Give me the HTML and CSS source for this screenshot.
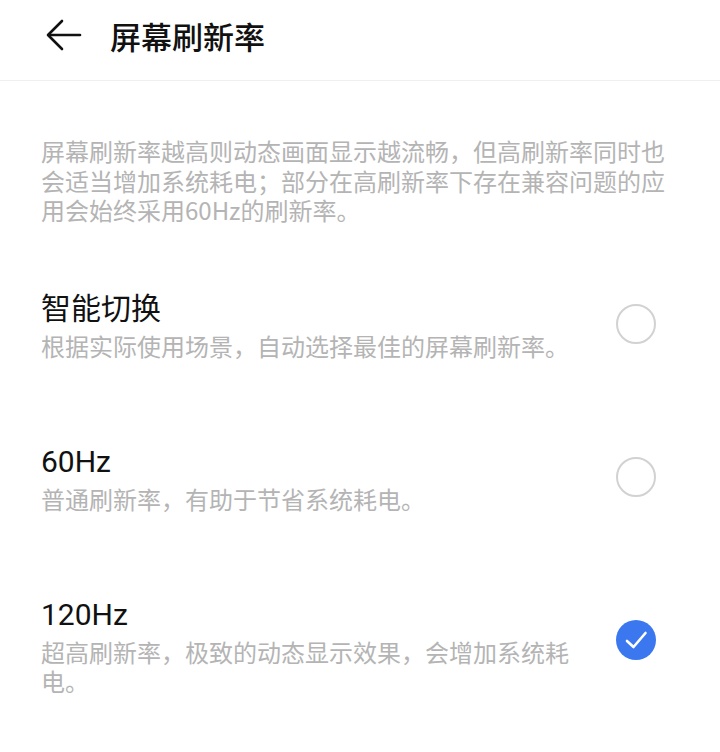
FILE: index.html
```html
<!DOCTYPE html>
<html lang="zh-CN">
<head>
  <meta charset="UTF-8">
  <title>屏幕刷新率</title>
  <link rel="stylesheet" href="styles.css">
</head>
<body>
  <header class="topbar">
    <button class="back-btn" aria-label="返回">
      <svg width="36" height="32" viewBox="0 0 36 32" fill="none" stroke="#111" stroke-width="2.6" stroke-linecap="round" stroke-linejoin="round">
        <path d="M34 16H3"/>
        <path d="M16 2L2 16l14 14"/>
      </svg>
    </button>
    <h1 class="title">屏幕刷新率</h1>
  </header>

  <p class="intro">屏幕刷新率越高则动态画面显示越流畅，但高刷新率同时也会适当增加系统耗电；部分在高刷新率下存在兼容问题的应用会始终采用60Hz的刷新率。</p>

  <ul class="options">
    <li class="option">
      <div class="option-text">
        <div class="option-name">智能切换</div>
        <div class="option-desc">根据实际使用场景，自动选择最佳的屏幕刷新率。</div>
      </div>
      <span class="radio"></span>
    </li>
    <li class="option">
      <div class="option-text">
        <div class="option-name">60Hz</div>
        <div class="option-desc">普通刷新率，有助于节省系统耗电。</div>
      </div>
      <span class="radio"></span>
    </li>
    <li class="option">
      <div class="option-text">
        <div class="option-name">120Hz</div>
        <div class="option-desc">超高刷新率，极致的动态显示效果，会增加系统耗电。</div>
      </div>
      <span class="radio checked">
        <svg width="40" height="40" viewBox="0 0 40 40" fill="none" stroke="#fff" stroke-width="2.6" stroke-linecap="round" stroke-linejoin="round">
          <path d="M11 21l6.5 6L29.5 13"/>
        </svg>
      </span>
    </li>
  </ul>
</body>
</html>
```

FILE: styles.css
```css
body {
  margin: 0;
  background: #fff;
  color: #111;
  font-family: Roboto, "Noto Sans CJK SC", sans-serif;
}

.topbar {
  display: flex;
  align-items: center;
  height: 80px;
  padding: 0 0 0 46px;
  border-bottom: 1px solid #efefef;
}

.back-btn {
  display: flex;
  align-items: center;
  padding: 0;
  margin: -10px 28px 0 0;
  background: none;
  border: none;
  cursor: pointer;
}

.title {
  margin: -8px 0 0 0;
  font-family: "Noto Sans CJK SC", sans-serif;
  font-size: 31px;
  font-weight: 500;
  line-height: 40px;
}

.intro {
  margin: 0;
  padding: 55px 41px 0 41px;
  font-family: "Noto Sans CJK SC", sans-serif;
  font-size: 24px;
  line-height: 29.5px;
  color: #b4b4b4;
}

.options {
  list-style: none;
  margin: 23px 0 0 0;
  padding: 0;
}

.option {
  display: flex;
  align-items: center;
  gap: 40px;
  padding: 40.5px 64px 40.5px 41px;
}

.option-text {
  flex: 1;
}

.option-name {
  font-size: 30px;
  line-height: 42px;
  color: #111;
}

.option-desc {
  margin-top: 1px;
  font-family: "Noto Sans CJK SC", sans-serif;
  font-size: 24px;
  line-height: 29px;
  color: #b4b4b4;
}

.radio {
  box-sizing: border-box;
  width: 40px;
  height: 40px;
  flex: none;
  border: 2.5px solid #d2d2d2;
  border-radius: 50%;
}

.radio.checked {
  display: flex;
  margin-top: -10px;
  border: none;
  background: #3b78f0;
}
```
